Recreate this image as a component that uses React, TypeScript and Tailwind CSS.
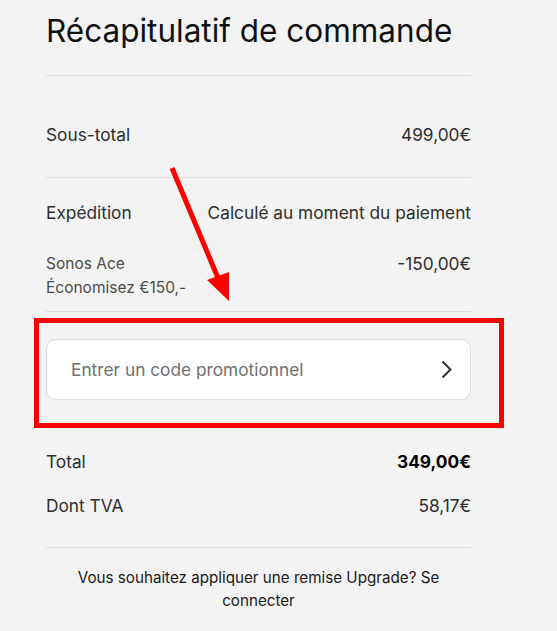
import React from "react";

function Row({ label, value, bold }: { label: string; value: string; bold?: boolean }) {
  return (
    <div className="flex items-center justify-between text-[17.3px] leading-6 text-[#2e2e2e]">
      <span>{label}</span>
      <span className={bold ? "font-bold text-black" : ""}>{value}</span>
    </div>
  );
}

export default function App() {
  return (
    <div
      className="relative min-h-screen w-full bg-[#f3f3f3]"
      style={{ fontFamily: "Inter, 'Liberation Sans', sans-serif" }}
    >
      <div className="ml-[46px] w-[425px] pt-[12px]">
        <h1 className="text-[31.5px] leading-[38px] font-normal text-[#111]">
          Récapitulatif de commande
        </h1>

        <div className="mt-[25px] border-t border-[#dedede]" />

        {/* Sous-total */}
        <div className="mt-[47px]">
          <Row label="Sous-total" value="499,00€" />
        </div>

        <div className="mt-[30px] border-t border-[#dedede]" />

        {/* Expédition */}
        <div className="mt-[23px]">
          <Row label="Expédition" value="Calculé au moment du paiement" />
        </div>

        {/* Remise */}
        <div className="mt-[27px] flex items-start justify-between">
          <div className="text-[15.5px] leading-6 text-[#4d4d45]">
            <div>Sonos Ace</div>
            <div>Économisez €150,-</div>
          </div>
          <span className="text-[17.3px] leading-6 text-[#2e2e2e]">-150,00€</span>
        </div>

        <div className="mt-[11px] border-t border-[#dedede]" />

        {/* Code promo */}
        <div className="mt-[27px] flex h-[61px] items-center justify-between rounded-[10px] border border-[#dcdcdc] bg-white pl-[24px] pr-[18px]">
          <span className="text-[17.3px] text-[#6f6f6f]">Entrer un code promotionnel</span>
          <svg width="11" height="19" viewBox="0 0 11 19" fill="none">
            <path d="M1.5 1.5 L9.5 9.5 L1.5 17.5" stroke="#333" strokeWidth="2" />
          </svg>
        </div>

        {/* Totaux */}
        <div className="mt-[50px]">
          <Row label="Total" value="349,00€" bold />
        </div>
        <div className="mt-[20px]">
          <Row label="Dont TVA" value="58,17€" />
        </div>

        <div className="mt-[29px] border-t border-[#dedede]" />

        <p className="mt-[18px] text-center text-[15.2px] leading-[23px] text-[#1a1a1a]">
          Vous souhaitez appliquer une remise Upgrade? Se connecter
        </p>
      </div>

      {/* Annotation */}
      <div className="absolute left-[34px] top-[318px] h-[110px] w-[470px] border-[5px] border-[#ff0000]" />
      <svg className="absolute left-0 top-0" width="557" height="631" viewBox="0 0 557 631">
        <line x1="172" y1="168" x2="218" y2="278" stroke="#ff0000" strokeWidth="5" />
        <polygon points="207,280 229,272 229,301" fill="#ff0000" />
      </svg>
    </div>
  );
}
